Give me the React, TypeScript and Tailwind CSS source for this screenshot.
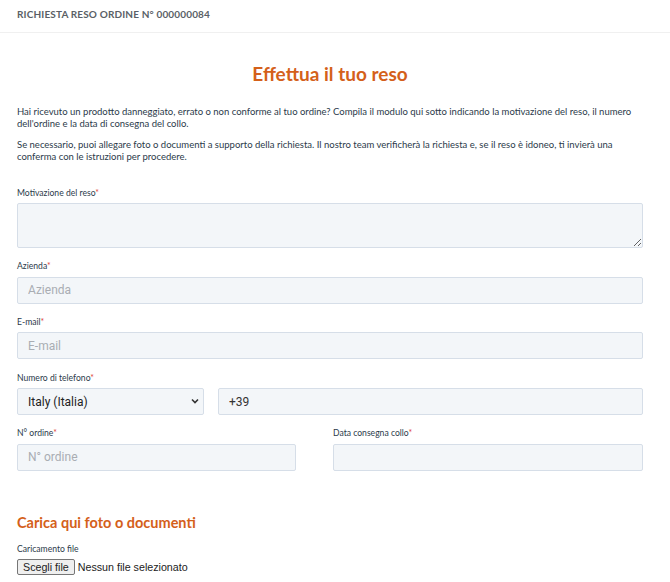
import React from "react";

const inputCls =
  "h-[27px] w-full rounded-[2px] border border-[#d6dee8] bg-[#f3f6f9] px-[10px] text-[12px] text-[#333] placeholder:text-[#a9adb3] outline-none [font-family:Roboto,sans-serif]";

function Label({ children }: { children: React.ReactNode }) {
  return (
    <div className="mb-[5px] text-[8.6px] leading-[10px] text-[#2b3a4a]">
      {children}
      <span className="text-[#e0453a]">*</span>
    </div>
  );
}

export default function App() {
  return (
    <div className="min-h-[582px] w-[670px] bg-white [font-family:Lato,'Noto_Sans',sans-serif]">
      <div className="flex h-[33px] items-center border-b border-[#f0f0f0] pl-[17px] pb-[3px]">
        <span className="text-[10px] font-bold tracking-[0.15px] text-[#5a5f66]">
          RICHIESTA RESO ORDINE N° 000000084
        </span>
      </div>
      <div className="ml-[17px] w-[626px]">
        <h1 className="mt-[29px] text-center text-[19px] font-bold leading-[24px] text-[#d4601a]">
          Effettua il tuo reso
        </h1>
        <p className="mt-[20px] text-[9.5px] leading-[12px] text-[#2b3a4a]">
          Hai ricevuto un prodotto danneggiato, errato o non conforme al tuo ordine? Compila il modulo qui sotto indicando la motivazione del reso, il numero dell'ordine e la data di consegna del collo.
        </p>
        <p className="mt-[9px] text-[9.5px] leading-[12px] text-[#2b3a4a]">
          Se necessario, puoi allegare foto o documenti a supporto della richiesta. Il nostro team verificherà la richiesta e, se il reso è idoneo, ti invierà una conferma con le istruzioni per procedere.
        </p>

        <div className="mt-[25px]">
          <Label>Motivazione del reso</Label>
          <textarea className="block h-[45px] w-full rounded-[2px] border border-[#d6dee8] bg-[#f3f6f9] outline-none" />
        </div>
        <div className="mt-[13px]">
          <Label>Azienda</Label>
          <input className={inputCls} placeholder="Azienda" />
        </div>
        <div className="mt-[13px]">
          <Label>E-mail</Label>
          <input className={inputCls} placeholder="E-mail" />
        </div>
        <div className="mt-[14px]">
          <Label>Numero di telefono</Label>
          <div className="flex gap-[14px]">
            <div className="relative w-[187px] shrink-0">
              <div className="flex h-[27px] items-center rounded-[2px] border border-[#d6dee8] bg-[#f3f6f9] pl-[10px] text-[12px] text-[#222] [font-family:Roboto,sans-serif]">
                Italy (Italia)
              </div>
              <svg
                className="absolute right-[5px] top-[10px]"
                width="8"
                height="6"
                viewBox="0 0 8 6"
              >
                <path d="M1 1.5 L4 4.5 L7 1.5" fill="none" stroke="#333" strokeWidth="1.6" />
              </svg>
            </div>
            <input className={inputCls} defaultValue="+39" />
          </div>
        </div>
        <div className="mt-[13px] flex">
          <div className="w-[279px]">
            <Label>N° ordine</Label>
            <input className={inputCls} placeholder="N° ordine" />
          </div>
          <div className="ml-[37px] flex-1">
            <Label>Data consegna collo</Label>
            <input className={inputCls} />
          </div>
        </div>

        <h2 className="mt-[43px] text-[14.5px] font-bold leading-[18px] text-[#d4601a]">
          Carica qui foto o documenti
        </h2>
        <div className="mt-[12px] text-[8.6px] leading-[10px] text-[#2b3a4a]">Caricamento file</div>
        <div className="mt-[5px] flex items-center gap-[3px] text-[10.7px] text-[#222] [font-family:'Liberation_Sans',Arial,sans-serif]">
          <span className="rounded-[2px] border border-[#767676] bg-[#efefef] px-[5px] leading-[14px]">
            Scegli file
          </span>
          <span>Nessun file selezionato</span>
        </div>
      </div>
    </div>
  );
}
